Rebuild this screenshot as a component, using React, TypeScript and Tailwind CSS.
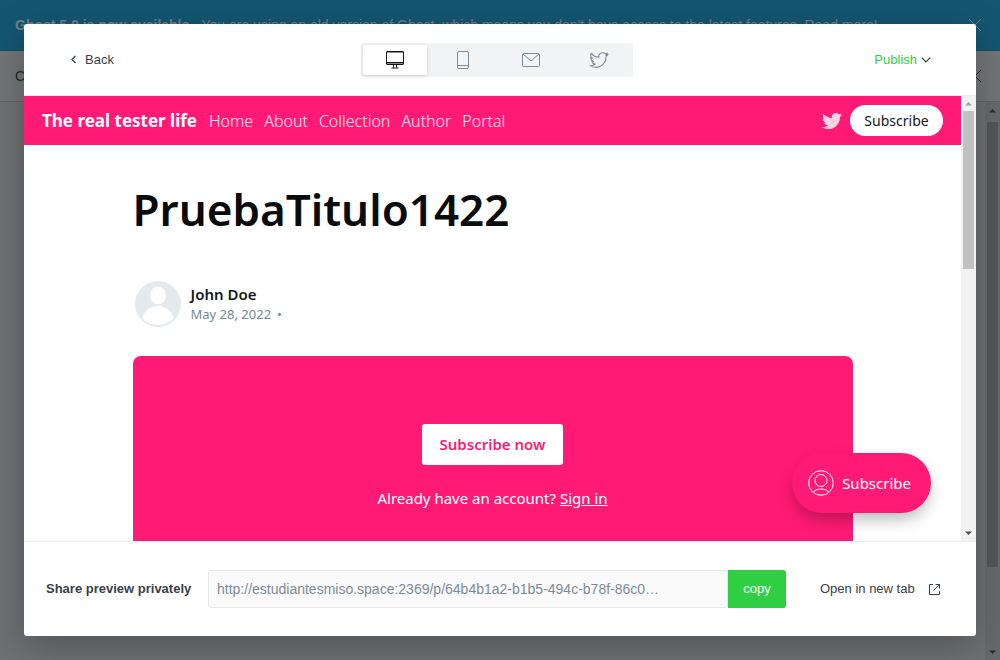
import React from 'react';

const TWITTER_PATH =
  'M459.37 151.716c.325 4.548.325 9.097.325 13.645 0 138.72-105.583 298.558-298.558 298.558-59.452 0-114.68-17.219-161.137-47.106 8.447.974 16.568 1.299 25.34 1.299 49.055 0 94.213-16.568 130.274-44.832-46.132-.975-84.792-31.188-98.112-72.772 6.498.974 12.995 1.624 19.818 1.624 9.421 0 18.843-1.3 27.614-3.573-48.081-9.747-84.143-51.98-84.143-102.985v-1.299c13.969 7.797 30.214 12.67 47.431 13.319-28.264-18.843-46.781-51.005-46.781-87.391 0-19.492 5.197-37.36 14.294-52.954 51.655 63.675 129.3 105.258 216.365 109.807-1.624-7.797-2.599-15.918-2.599-24.04 0-57.828 46.782-104.934 104.934-104.934 30.213 0 57.502 12.67 76.67 33.137 23.715-4.548 46.456-13.32 66.599-25.34-7.798 24.366-24.366 44.833-46.132 57.827 21.117-2.273 41.584-8.122 60.426-16.243-14.292 20.791-32.161 39.308-52.628 54.253z';

function DesktopIcon() {
  return (
    <svg width="20" height="20" viewBox="0 0 20 20" fill="none" stroke="currentColor" aria-hidden="true">
      <rect x="1.5" y="1.5" width="17" height="13" rx="0.5" />
      <path d="M1.5 12.5h17M8.5 14.5v3M11.5 14.5v3M6.5 18h7" />
      <path d="M2 13.5h16M2 2.5h16" strokeOpacity="0.5" />
    </svg>
  );
}

function PhoneIcon() {
  return (
    <svg width="20" height="20" viewBox="0 0 20 20" fill="none" stroke="currentColor" aria-hidden="true">
      <rect x="4.5" y="1.5" width="11" height="17" rx="1.5" />
      <path d="M4.5 15.5h11" />
    </svg>
  );
}

function MailIcon() {
  return (
    <svg width="20" height="20" viewBox="0 0 20 20" fill="none" stroke="currentColor" aria-hidden="true">
      <rect x="1.5" y="3.5" width="17" height="13" rx="1" />
      <path d="M2 4l8 7 8-7" />
    </svg>
  );
}

function TwitterOutlineIcon() {
  return (
    <svg width="20" height="20" viewBox="-28 -28 568 568" fill="none" stroke="currentColor" strokeWidth="30" strokeLinejoin="round" aria-hidden="true">
      <path d={TWITTER_PATH} />
    </svg>
  );
}

function CloseIcon() {
  return (
    <svg width="14" height="14" viewBox="0 0 14 14" fill="none" stroke="currentColor" aria-hidden="true">
      <path d="M1 1l12 12M13 1L1 13" />
    </svg>
  );
}

function Scrollbar({ dark = false }: { dark?: boolean }) {
  return (
    <div
      aria-hidden="true"
      className={
        dark
          ? 'flex w-[15px] shrink-0 flex-col items-center justify-between bg-[#68696b] text-[#2b2c2d]'
          : 'flex w-[15px] shrink-0 flex-col items-center justify-between bg-[#f1f1f1] text-[#505050]'
      }
    >
      <svg width="15" height={dark ? 20 : 15} viewBox={dark ? '0 -1 15 20' : '0 0 15 15'} fill={dark ? '#2b2c2d' : '#a3a3a3'}>
        <path d="M4 9.500L7.500 6L11 9.500z" />
      </svg>
      <div className="flex min-h-0 w-[11px] flex-1 flex-col">
        <div className={dark ? 'h-[85%] bg-[#555658]' : 'h-[38%] bg-[#c1c1c1]'} />
      </div>
      <svg width="15" height="15" viewBox="0 0 15 15" fill="currentColor">
        <path d="M4 5.500h7L7.500 9z" />
      </svg>
    </div>
  );
}

function EditorPage() {
  return (
    <div className="flex h-full flex-col bg-[#6f7072]" aria-hidden="true">
      <div className="flex h-[51px] shrink-0 items-center justify-between border-b border-[#10506f] bg-[#145672] pl-[15px] pr-[18px] text-[#777f84]">
        <p className="whitespace-nowrap text-[14px]">
          <b>Ghost 5.0 is now available</b> - You are using an old version of Ghost, which means you don't have access to
          the latest features. Read more!
        </p>
        <CloseIcon />
      </div>
      <div className="flex h-[51px] shrink-0 items-center justify-between border-b border-[#616264] bg-[#737476] pl-[15px] pr-[18px] text-[14px] text-[#26282a]">
        <span>Content</span>
        <CloseIcon />
      </div>
      <div className="flex min-h-0 flex-1 justify-end">
        <Scrollbar dark />
      </div>
    </div>
  );
}

const tabs = [
  { label: 'Desktop', icon: <DesktopIcon />, active: true },
  { label: 'Mobile', icon: <PhoneIcon />, active: false },
  { label: 'Email', icon: <MailIcon />, active: false },
  { label: 'Twitter', icon: <TwitterOutlineIcon />, active: false },
];

function DialogHeader() {
  return (
    <header className="grid h-[72px] shrink-0 grid-cols-[1fr_auto_1fr] items-center border-b border-[#ebeef0] pl-[38px] pr-[45px] text-[13px]">
      <button type="button" className="flex items-center gap-2 justify-self-start pl-2 text-[#394047]">
        <svg width="7" height="9" viewBox="0 0 7 9" fill="none" stroke="currentColor" strokeWidth="1.300" aria-hidden="true">
          <path d="M5.500 1L2 4.500L5.500 8" />
        </svg>
        Back
      </button>
      <div className="flex h-[34px] gap-1 rounded-[3px] bg-[#f1f3f4] p-0.5">
        {tabs.map((tab) => (
          <button
            key={tab.label}
            type="button"
            aria-label={tab.label}
            aria-pressed={tab.active}
            className={
              tab.active
                ? 'flex w-16 items-center justify-center rounded-[2px] bg-white text-[#15171a] shadow-[0_1px_4px_rgba(0,0,0,0.14)]'
                : 'flex w-16 items-center justify-center text-[#7c8b9a]'
            }
          >
            {tab.icon}
          </button>
        ))}
      </div>
      <button type="button" className="flex items-center gap-1 justify-self-end text-[#30cf43]">
        Publish
        <svg width="10" height="6" viewBox="0 0 10 6" fill="none" stroke="#394047" strokeWidth="1.200" aria-hidden="true">
          <path d="M0.700 0.700L5 5L9.300 0.700" />
        </svg>
      </button>
    </header>
  );
}

function SiteHeader() {
  return (
    <div className="flex h-[49px] shrink-0 items-center justify-between bg-[#ff1a75] px-[18px] text-white">
      <div className="flex items-center gap-3 whitespace-nowrap">
        <a href="#home" className="text-[17px] font-bold">
          The real tester life
        </a>
        <nav className="flex gap-[11px] text-[16px] font-light text-white/90">
          <a href="#home">Home</a>
          <a href="#about">About</a>
          <a href="#collection">Collection</a>
          <a href="#author">Author</a>
          <a href="#portal">Portal</a>
        </nav>
      </div>
      <div className="flex items-center gap-2">
        <a href="#twitter" aria-label="Twitter" className="text-white/80">
          <svg width="20" height="20" viewBox="0 0 512 512" fill="currentColor" aria-hidden="true">
            <path d={TWITTER_PATH} />
          </svg>
        </a>
        <a href="#subscribe" className="flex h-[31px] w-[93px] items-center justify-center rounded-full bg-white text-[14px] text-[#15171a]">
          Subscribe
        </a>
      </div>
    </div>
  );
}

function SitePreview() {
  return (
    <section className="flex min-h-0 flex-1" aria-label="Post preview">
      <div className="relative flex min-w-0 flex-1 flex-col overflow-hidden font-['Noto_Sans',sans-serif]">
        <SiteHeader />
        <article className="mx-auto flex min-h-0 w-full max-w-[720px] flex-1 flex-col">
          <h1 className="mt-8 text-[44px] font-semibold leading-[64px] text-[#0a0b0c]">PruebaTitulo1422</h1>
          <div className="mt-10 flex items-center gap-[10px] pl-0.5">
            <svg width="46" height="46" viewBox="0 0 46 46" aria-hidden="true">
              <circle cx="23" cy="23" r="23" fill="#e3e9ed" />
              <ellipse cx="23" cy="14.500" rx="8" ry="9" fill="#fff" />
              <path d="M7 37C10 29 16 25 23 25s13 4 16 12c-4 4.500-10 7-16 7s-12-2.500-16-7z" fill="#fff" />
            </svg>
            <div>
              <p className="text-[15px] font-semibold leading-5 text-[#15171a]">John Doe</p>
              <p className="flex gap-1.5 text-[13px] leading-5 text-[#738a94]">
                <time dateTime="2022-05-28">May 28, 2022</time>
                <span>•</span>
              </p>
            </div>
          </div>
          <div className="mt-[29px] flex min-h-0 flex-1 flex-col items-center rounded-t-lg bg-[#ff1a75] pt-[68px] text-white">
            <button type="button" className="h-[41px] shrink-0 rounded-[3px] bg-white px-[18px] text-[15px] font-semibold text-[#ff1a75]">
              Subscribe now
            </button>
            <p className="mt-[21px] text-[15px] leading-6">
              Already have an account?{' '}
              <a href="#signin" className="underline">
                Sign in
              </a>
            </p>
          </div>
        </article>
        <button
          type="button"
          className="absolute bottom-7 right-[30px] flex h-[60px] items-center gap-2 rounded-full bg-[#ff1a75] px-4 pr-5 text-[15px] text-white shadow-[0_8px_16px_-2px_rgba(0,0,0,0.28)]"
        >
          <svg width="26" height="26" viewBox="0 0 26 26" fill="none" stroke="currentColor" aria-hidden="true">
            <circle cx="13" cy="13" r="12.300" />
            <circle cx="13" cy="10.500" r="6" />
            <path d="M5 22.300c2-2.200 4.700-3.300 8-3.300s6 1.100 8 3.300" />
          </svg>
          Subscribe
        </button>
      </div>
      <Scrollbar />
    </section>
  );
}

function DialogFooter() {
  return (
    <footer className="flex h-[95px] shrink-0 items-center border-t border-[#ebeef0] pl-[22px] pr-[35px] text-[13px] text-[#394047]">
      <label htmlFor="preview-url" className="min-w-[150px] whitespace-nowrap font-bold">
        Share preview privately
      </label>
      <div className="ml-3 mr-[34px] flex h-[38px] min-w-0 flex-1">
        <input
          id="preview-url"
          readOnly
          value="http://estudiantesmiso.space:2369/p/64b4b1a2-b1b5-494c-b78f-86c0…"
          className="min-w-0 flex-1 rounded-[3px] border border-[#e6e9eb] bg-[#fafafa] px-2 text-[14px] text-[#7c8b9a] outline-none"
        />
        <button type="button" className="w-[58px] rounded-r-[3px] bg-[#30cf43] text-white">
          copy
        </button>
      </div>
      <a href="#preview" className="flex min-w-[121px] items-center justify-between whitespace-nowrap">
        Open in new tab
        <svg width="13" height="13" viewBox="0 0 13 13" fill="none" stroke="currentColor" aria-hidden="true">
          <path d="M5 1.500H1.500v10h10V8M7.500 1.500h4v4M11.500 1.500L5.500 7.500" />
        </svg>
      </a>
    </footer>
  );
}

export default function App() {
  return (
    <div className="relative h-screen overflow-hidden font-['Liberation_Sans',Arial,sans-serif]">
      <EditorPage />
      <div
        role="dialog"
        aria-label="Preview"
        className="absolute inset-6 flex flex-col overflow-hidden rounded-[3px] bg-white shadow-[0_10px_36px_rgba(0,0,0,0.25)]"
      >
        <DialogHeader />
        <SitePreview />
        <DialogFooter />
      </div>
    </div>
  );
}
